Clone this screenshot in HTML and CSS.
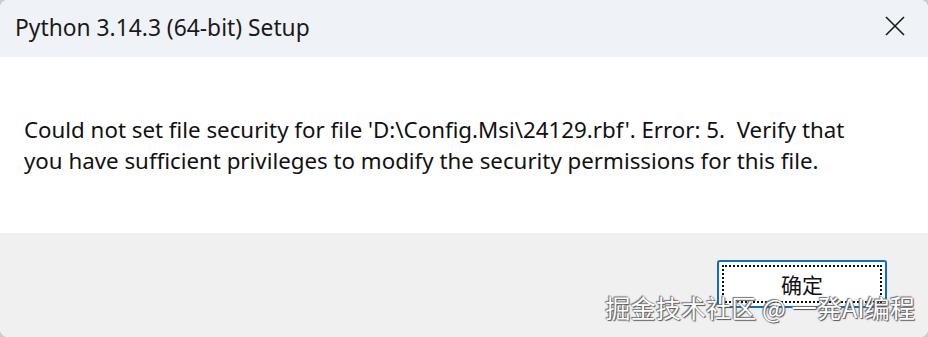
FILE: index.html
```html
<!DOCTYPE html>
<html lang="en">
<head>
<meta charset="utf-8">
<title>Python 3.14.3 (64-bit) Setup</title>
<link rel="stylesheet" href="styles.css">
</head>
<body>
<div class="window">
  <div class="titlebar">
    <span class="title">Python 3.14.3 (64-bit) Setup</span>
    <span class="close" aria-label="Close">
      <svg width="20" height="20" viewBox="0 0 20 20"><path d="M1 1 L19 19 M19 1 L1 19" stroke="#1a1a1a" stroke-width="1.6" fill="none"/></svg>
    </span>
  </div>
  <div class="content">
    <p class="message">Could not set file security for file 'D:\Config.Msi\24129.rbf'. Error: 5.&nbsp; Verify that you have sufficient privileges to modify the security permissions for this file.</p>
  </div>
  <div class="footer">
    <button class="ok"><span class="focus">确定</span></button>
  </div>
  <div class="watermark">掘金技术社区 @ 一発AI编程</div>
</div>
</body>
</html>
```
FILE: styles.css
```css
html, body {
  margin: 0;
  padding: 0;
  background: #c9ccd2;
}
.window {
  position: relative;
  width: 928px;
  height: 337px;
  display: flex;
  flex-direction: column;
  border-radius: 8px;
  overflow: hidden;
  background: #ffffff;
  font-family: "Noto Sans", "Open Sans", sans-serif;
  color: #111111;
}
.titlebar {
  height: 57px;
  flex: none;
  background: #eff3f8;
  display: flex;
  align-items: center;
  justify-content: space-between;
  padding: 0 23px 0 15px;
}
.title {
  font-size: 22.8px;
  color: #1a1a1a;
  margin-top: -2px;
}
.close {
  display: flex;
  width: 20px;
  height: 20px;
  margin-top: -6px;
}
.content {
  height: 176px;
  flex: none;
  background: #ffffff;
  box-sizing: border-box;
  padding: 57px 40px 0 24px;
}
.message {
  margin: 0;
  font-size: 22.3px;
  line-height: 31px;
  color: #111111;
  width: 838px;
}
.footer {
  flex: 1;
  background: #f0f0f0;
  display: flex;
  justify-content: flex-end;
  align-items: flex-start;
  padding: 27px 41px 0 0;
}
.ok {
  width: 170px;
  height: 48px;
  box-sizing: border-box;
  border: 2px solid #0a6fc7;
  border-radius: 3px;
  background: #ffffff;
  padding: 3px;
  display: flex;
  font-family: "Noto Sans CJK SC", sans-serif;
  font-size: 21px;
  color: #111111;
}
.focus {
  flex: 1;
  border: 2px dotted #111111;
  display: flex;
  align-items: center;
  justify-content: center;
}
.watermark {
  position: absolute;
  right: 13px;
  bottom: 12px;
  font-family: "Noto Sans CJK SC", sans-serif;
  font-size: 25.2px;
  color: #ffffff;
  text-shadow: 0 0 1px #555, 1px 1px 1px #555, -1px -1px 1px #777;
}
```
